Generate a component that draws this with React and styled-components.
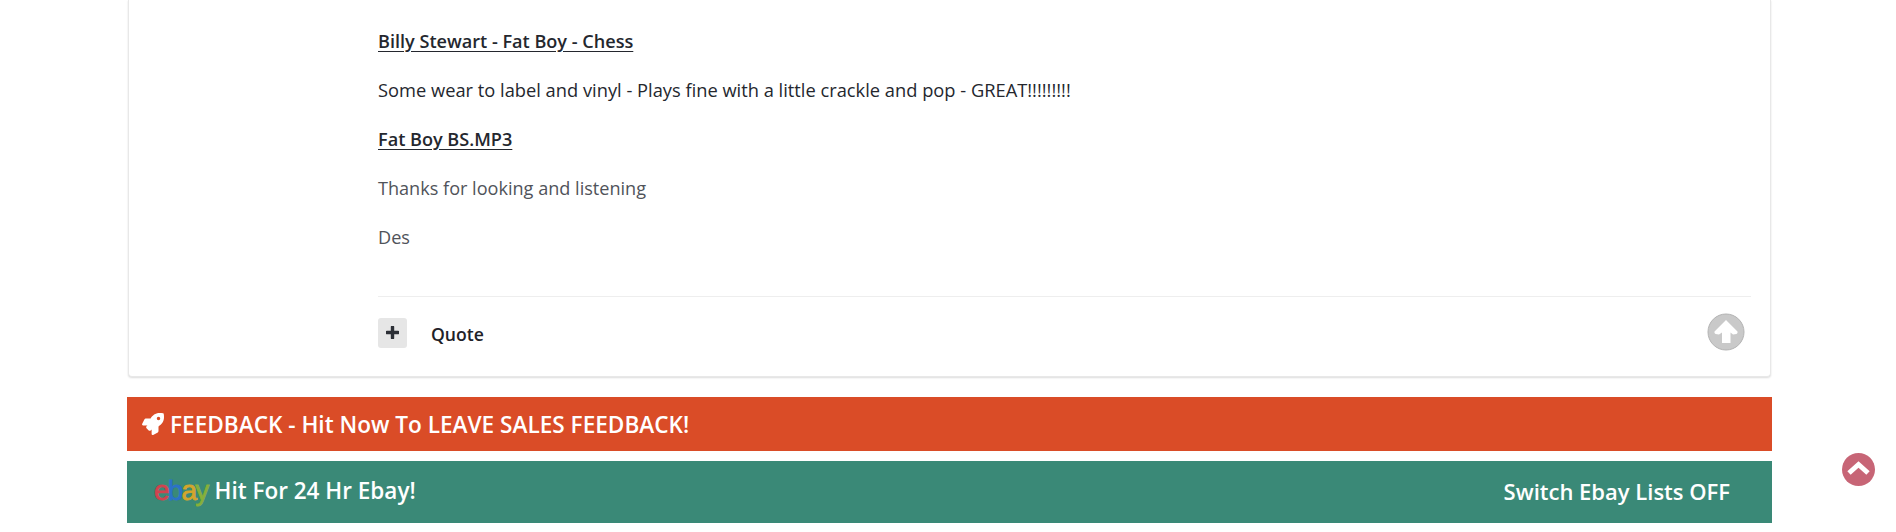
import React from "react";
import styled, { createGlobalStyle } from "styled-components";
import { FaRocket } from "react-icons/fa";

const Global = createGlobalStyle`
  html, body {
    margin: 0;
    padding: 0;
    background: #fff;
  }
  body {
    font-family: "Open Sans", "Noto Sans", sans-serif;
    overflow: hidden;
  }
`;

const Page = styled.div`
  width: 1645px;
  height: 532px;
  margin-left: 127px;
  display: flex;
  flex-direction: column;
`;

const Post = styled.section`
  height: 377px;
  margin: 0 1px;
  box-sizing: border-box;
  padding: 29px 19px 0 249px;
  background: #fff;
  border: 1px solid #e8e8e8;
  border-top: none;
  border-radius: 0 0 4px 4px;
  box-shadow: 0 1px 2px rgba(0, 0, 0, 0.14);
  display: flex;
  flex-direction: column;
`;

const Line = styled.p`
  margin: 0 0 25px;
  height: 24px;
  font-size: ${(p) => (p.$muted ? 18.1 : p.$strong ? 18.1 : 18.3)}px;
  line-height: 24px;
  white-space: nowrap;
  color: ${(p) => (p.$muted ? "#50535a" : "#24272e")};
  font-weight: ${(p) => (p.$strong ? 600 : 400)};
  text-decoration: ${(p) => (p.$strong ? "underline" : "none")};
  text-underline-offset: 3px;
`;

const Footer = styled.footer`
  margin-top: 22px;
  border-top: 1px solid #eeeeee;
  padding-top: 16px;
  display: flex;
  align-items: flex-start;
`;

const PlusButton = styled.button`
  width: 29px;
  height: 30px;
  margin: 5px 24px 0 0;
  padding: 0 0 2px;
  border: none;
  border-radius: 3px;
  background: #e6e6e6;
  display: flex;
  align-items: center;
  justify-content: center;
`;

const PlusIcon = styled.svg`
  width: 13px;
  height: 13px;
`;

const QuoteLink = styled.a`
  margin-top: 8px;
  font-size: 17.6px;
  line-height: 26px;
  font-weight: 600;
  color: #1f2228;
`;

const UpIcon = styled.svg`
  width: 38px;
  height: 38px;
  margin-left: auto;
  margin-right: 6px;
`;

const Banner = styled.a`
  box-sizing: border-box;
  height: ${(p) => p.$height}px;
  margin-top: ${(p) => p.$top}px;
  background: ${(p) => p.$bg};
  color: #fff;
  font-size: ${(p) => p.$size || 22}px;
  font-weight: 600;
  display: flex;
  align-items: center;
  white-space: nowrap;
`;

const FeedbackBanner = styled(Banner)`
  padding-left: 15px;
  gap: 6px;
  svg {
    font-size: 22px;
  }
`;

const EbayBanner = styled(Banner)`
  padding: 0 42px 3px 27px;
  justify-content: space-between;
`;

const EbayLink = styled.span`
  display: flex;
  align-items: center;
  font-size: 22.5px;
`;

const EbayLogo = styled.span`
  font-family: "Liberation Sans", sans-serif;
  font-weight: 400;
  font-size: 28px;
  letter-spacing: -1.8px;
  margin-right: 7px;
  -webkit-text-stroke: 0.8px;
  span:nth-child(1) { color: #d0434f; }
  span:nth-child(2) { color: #2b72c8; }
  span:nth-child(3) { color: #d3a52c; }
  span:nth-child(4) { color: #86b03a; }
`;

const ScrollTop = styled.svg`
  position: fixed;
  left: 1842px;
  top: 453px;
  width: 33px;
  height: 33px;
`;

export default function App() {
  return (
    <>
      <Global />
      <Page>
        <Post>
          <Line $strong>Billy Stewart - Fat Boy - Chess</Line>
          <Line>Some wear to label and vinyl - Plays fine with a little crackle and pop - GREAT!!!!!!!!!</Line>
          <Line $strong>Fat Boy BS.MP3</Line>
          <Line $muted>Thanks for looking and listening</Line>
          <Line $muted>Des</Line>
          <Footer>
            <PlusButton>
              <PlusIcon viewBox="0 0 13 13">
                <path d="M6.5 1 V12 M1 6.5 H12" stroke="#2c2f36" strokeWidth="3.4" strokeLinecap="round" />
              </PlusIcon>
            </PlusButton>
            <QuoteLink>Quote</QuoteLink>
            <UpIcon viewBox="0 0 38 38">
              <circle cx="19" cy="19" r="18" fill="#c9c9c9" stroke="#b4b4b4" />
              <path d="M19 7 L30.5 18.5 Q31 20 29.5 21 L26 21.5 L23.5 19.5 V30 H15 V19.5 L12 21.5 L8.5 21 Q7 20 7.5 18.5 Z" fill="#fff" />
            </UpIcon>
          </Footer>
        </Post>
        <FeedbackBanner $height={54} $top={20} $bg="#da4c27" $size={22.6}>
          <FaRocket />
          FEEDBACK - Hit Now To LEAVE SALES FEEDBACK!
        </FeedbackBanner>
        <EbayBanner $height={62} $top={10} $bg="#3a8977">
          <EbayLink>
            <EbayLogo>
              <span>e</span>
              <span>b</span>
              <span>a</span>
              <span>y</span>
            </EbayLogo>
            Hit For 24 Hr Ebay!
          </EbayLink>
          <span>Switch Ebay Lists OFF</span>
        </EbayBanner>
      </Page>
      <ScrollTop viewBox="0 0 33 33">
        <circle cx="16.5" cy="16.5" r="16.5" fill="#c76576" />
        <path d="M7 20 L16.5 11.5 L26 20" fill="none" stroke="#fff" strokeWidth="5" strokeLinejoin="miter" />
      </ScrollTop>
    </>
  );
}
